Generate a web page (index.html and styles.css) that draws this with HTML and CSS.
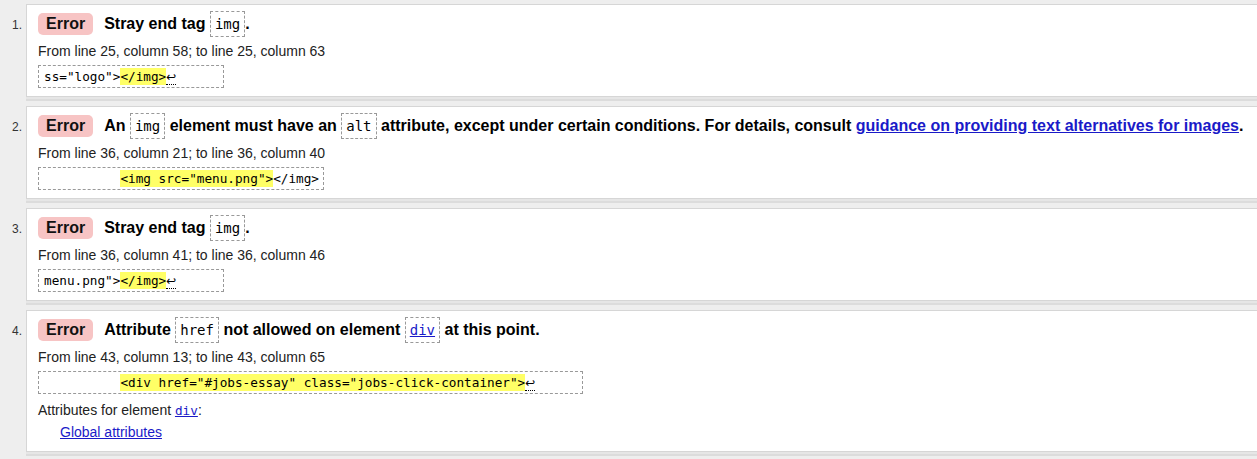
FILE: index.html
```html
<!DOCTYPE html>
<html lang="en">
<head>
<meta charset="utf-8">
<title>Validation results</title>
<link rel="stylesheet" href="styles.css">
</head>
<body>
<ol class="messages">
  <li class="item">
    <span class="num">1.</span>
    <div class="card">
      <p class="head"><span class="badge">Error</span><span class="msg">Stray end tag <code class="tag">img</code>.</span></p>
      <p class="loc">From line 25, column 58; to line 25, column 63</p>
      <p class="extract"><code>ss="logo"&gt;<mark>&lt;/img&gt;</mark><span class="lf">↩</span><span class="tail">     </span></code></p>
    </div>
  </li>
  <li class="item">
    <span class="num">2.</span>
    <div class="card">
      <p class="head"><span class="badge">Error</span><span class="msg">An <code class="tag">img</code> element must have an <code class="tag">alt</code> attribute, except under certain conditions. For details, consult <a href="#" class="link">guidance on providing text alternatives for images</a>.</span></p>
      <p class="loc">From line 36, column 21; to line 36, column 40</p>
      <p class="extract"><code>          <mark>&lt;img src="menu.png"&gt;</mark>&lt;/img&gt;</code></p>
    </div>
  </li>
  <li class="item">
    <span class="num">3.</span>
    <div class="card">
      <p class="head"><span class="badge">Error</span><span class="msg">Stray end tag <code class="tag">img</code>.</span></p>
      <p class="loc">From line 36, column 41; to line 36, column 46</p>
      <p class="extract"><code>menu.png"&gt;<mark>&lt;/img&gt;</mark><span class="lf">↩</span><span class="tail">     </span></code></p>
    </div>
  </li>
  <li class="item">
    <span class="num">4.</span>
    <div class="card card-long">
      <p class="head"><span class="badge">Error</span><span class="msg">Attribute <code class="tag">href</code> not allowed on element <code class="tag"><a href="#" class="codelink">div</a></code> at this point.</span></p>
      <p class="loc">From line 43, column 13; to line 43, column 65</p>
      <p class="extract"><code>          <mark>&lt;div href="#jobs-essay" class="jobs-click-container"&gt;</mark><span class="lf">↩</span><span class="tail">     </span></code></p>
      <p class="attrs">Attributes for element <a href="#" class="codelink">div</a>:</p>
      <p class="global"><a href="#" class="plainlink">Global attributes</a></p>
    </div>
  </li>
</ol>
</body>
</html>
```

FILE: styles.css
```css
html, body {
  margin: 0;
  padding: 0;
}
body {
  background: #eeeeee;
  font-family: "Liberation Sans", Arial, sans-serif;
  color: #000;
  overflow: hidden;
  width: 1257px;
  height: 459px;
}
.messages {
  list-style: none;
  margin: 0;
  padding: 4px 0 0 0;
  display: flex;
  flex-direction: column;
  gap: 9px;
}
.item {
  display: flex;
  align-items: baseline;
}
.num {
  width: 22px;
  flex: none;
  text-align: right;
  padding-right: 4px;
  font-size: 12px;
  color: #333;
}
.card {
  flex: 1;
  margin-right: -20px;
  background: #fff;
  border: 1px solid #d6d6d6;
  box-shadow: 0 2px 0 #e6e6e6, 0 4px 0 #dcdcdc;
  padding: 8px 11px 8px 11px;
}
.card-long {
  padding-bottom: 10px;
}
.card p {
  margin: 0;
}
.head {
  font-size: 16px;
  font-weight: bold;
  line-height: 22px;
  height: 22px;
  white-space: nowrap;
}
.badge {
  display: inline-block;
  background: #f7c4c4;
  color: #111;
  border-radius: 5px;
  padding: 2px 8px;
  line-height: 18px;
  margin-right: 11px;
}
.tag {
  font-family: "DejaVu Sans Mono", "Liberation Mono", monospace;
  font-weight: normal;
  font-size: 14px;
  line-height: 16px;
  border: 1px dashed #999;
  padding: 4px 4px;
}
.link {
  color: #1a1ac8;
  text-decoration: underline;
}
.loc {
  margin-top: 7px !important;
  font-size: 14px;
  line-height: 18px;
  color: #222;
}
.extract {
  margin-top: 5px !important;
  display: table;
  border: 1px dashed #999;
  padding: 2px 4px 2px 5px;
  font-family: "DejaVu Sans Mono", "Liberation Mono", monospace;
  font-size: 12.7px;
  line-height: 17px;
  height: 17px;
}
.extract code {
  font-family: "DejaVu Sans Mono", "Liberation Mono", monospace;
  font-size: 12.7px;
  line-height: 17px;
  white-space: pre;
  color: #000;
}
mark {
  background: #ffff66;
  color: #000;
  padding: 1px 0;
}
.lf {
  font-family: "DejaVu Sans", sans-serif;
  font-size: 12px;
  line-height: 10px;
  border-bottom: 1px dotted #000;
}
.tail {
  white-space: pre;
  padding-right: 4px;
}
.codelink {
  font-family: "DejaVu Sans Mono", "Liberation Mono", monospace;
  color: #1a1ac8;
  text-decoration: underline;
}
.attrs {
  margin-top: 7px !important;
  font-size: 14px;
  line-height: 18px;
  color: #222;
}
.attrs .codelink {
  font-size: 12.7px;
  line-height: 14px;
}
.global {
  margin-top: 4px !important;
  padding-left: 22px;
  font-size: 14px;
  line-height: 18px;
}
.plainlink {
  color: #1a1ac8;
  text-decoration: underline;
}
```
